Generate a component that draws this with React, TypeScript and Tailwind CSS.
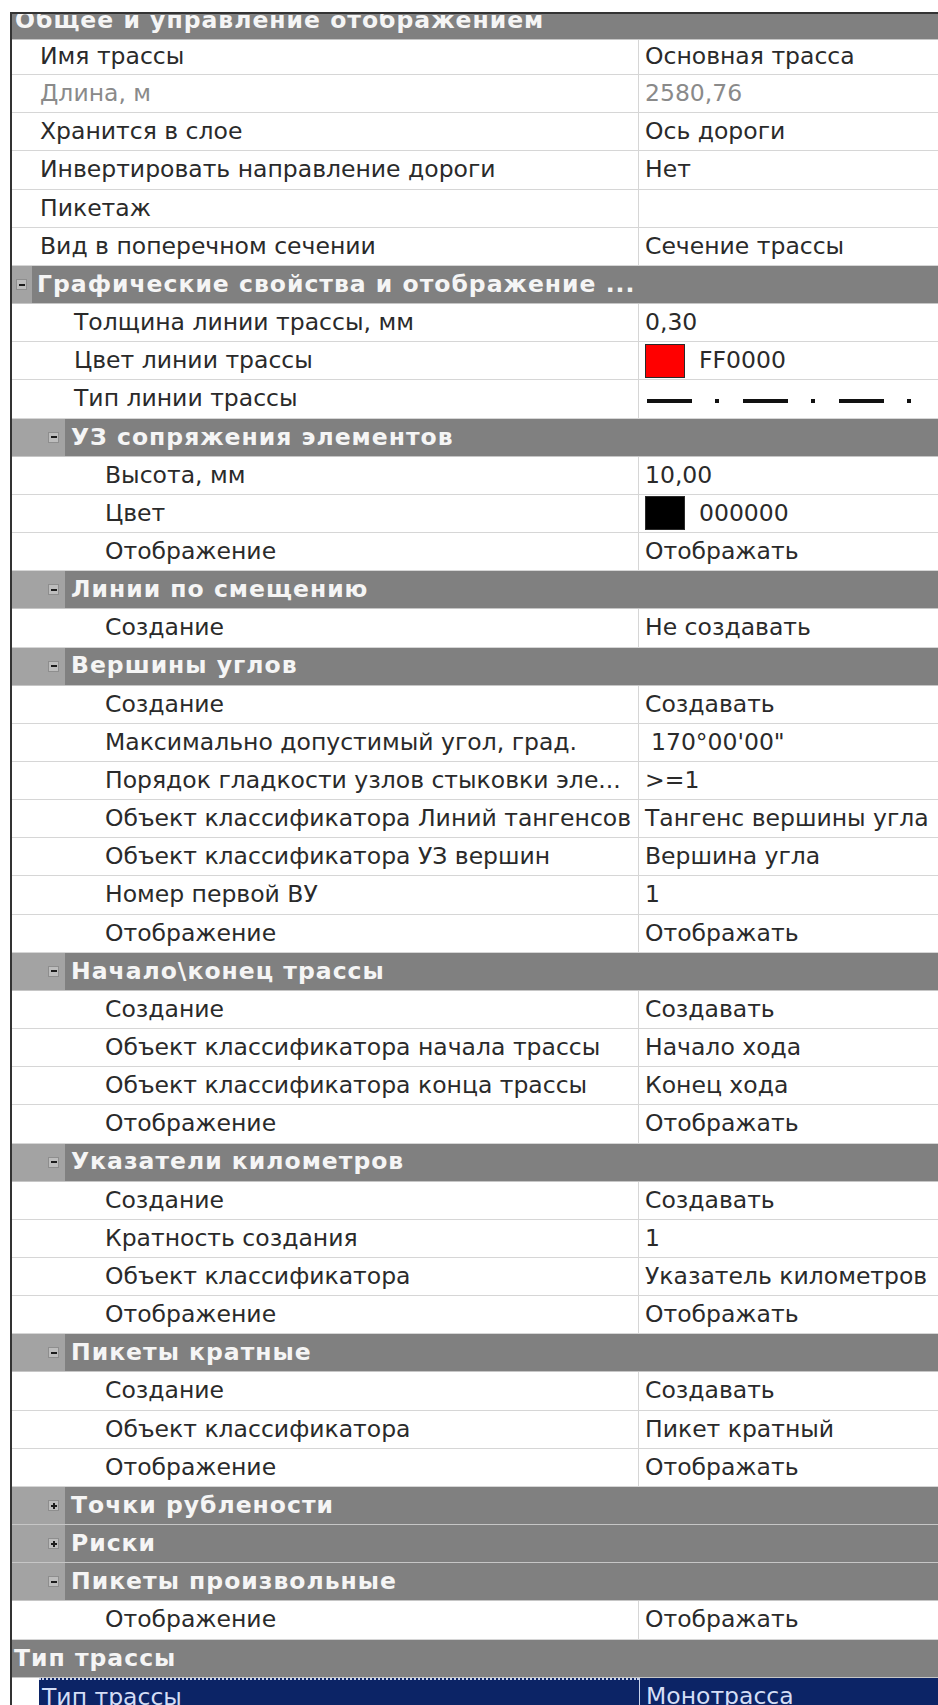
import React from "react";

type Row =
  | { kind: "group"; text: string; top?: boolean }
  | { kind: "section"; level: 1 | 2; text: string; open: boolean }
  | {
      kind: "prop";
      level: 0 | 1 | 2;
      label: string;
      value?: string;
      muted?: boolean;
      swatch?: string;
      lineType?: boolean;
      selected?: boolean;
      shift?: boolean;
      first?: boolean;
    };

const rows: Row[] = [
  { kind: "group", text: "Общее и управление отображением", top: true },
  { kind: "prop", level: 0, label: "Имя трассы", value: "Основная трасса", first: true },
  { kind: "prop", level: 0, label: "Длина, м", value: "2580,76", muted: true },
  { kind: "prop", level: 0, label: "Хранится в слое", value: "Ось дороги" },
  { kind: "prop", level: 0, label: "Инвертировать направление дороги", value: "Нет" },
  { kind: "prop", level: 0, label: "Пикетаж", value: "" },
  { kind: "prop", level: 0, label: "Вид в поперечном сечении", value: "Сечение трассы" },
  { kind: "section", level: 1, text: "Графические свойства и отображение ...", open: true },
  { kind: "prop", level: 1, label: "Толщина линии трассы, мм", value: "0,30" },
  { kind: "prop", level: 1, label: "Цвет линии трассы", value: "FF0000", swatch: "#ff0000" },
  { kind: "prop", level: 1, label: "Тип линии трассы", lineType: true },
  { kind: "section", level: 2, text: "УЗ сопряжения элементов", open: true },
  { kind: "prop", level: 2, label: "Высота, мм", value: "10,00" },
  { kind: "prop", level: 2, label: "Цвет", value: "000000", swatch: "#000000" },
  { kind: "prop", level: 2, label: "Отображение", value: "Отображать" },
  { kind: "section", level: 2, text: "Линии по смещению", open: true },
  { kind: "prop", level: 2, label: "Создание", value: "Не создавать" },
  { kind: "section", level: 2, text: "Вершины углов", open: true },
  { kind: "prop", level: 2, label: "Создание", value: "Создавать" },
  { kind: "prop", level: 2, label: "Максимально допустимый угол, град.", value: "170°00'00\"", shift: true },
  { kind: "prop", level: 2, label: "Порядок гладкости узлов стыковки эле...", value: ">=1" },
  { kind: "prop", level: 2, label: "Объект классификатора Линий тангенсов", value: "Тангенс вершины угла" },
  { kind: "prop", level: 2, label: "Объект классификатора УЗ вершин", value: "Вершина угла" },
  { kind: "prop", level: 2, label: "Номер первой ВУ", value: "1" },
  { kind: "prop", level: 2, label: "Отображение", value: "Отображать" },
  { kind: "section", level: 2, text: "Начало\\конец трассы", open: true },
  { kind: "prop", level: 2, label: "Создание", value: "Создавать" },
  { kind: "prop", level: 2, label: "Объект классификатора начала трассы", value: "Начало хода" },
  { kind: "prop", level: 2, label: "Объект классификатора конца трассы", value: "Конец хода" },
  { kind: "prop", level: 2, label: "Отображение", value: "Отображать" },
  { kind: "section", level: 2, text: "Указатели километров", open: true },
  { kind: "prop", level: 2, label: "Создание", value: "Создавать" },
  { kind: "prop", level: 2, label: "Кратность создания", value: "1" },
  { kind: "prop", level: 2, label: "Объект классификатора", value: "Указатель километров" },
  { kind: "prop", level: 2, label: "Отображение", value: "Отображать" },
  { kind: "section", level: 2, text: "Пикеты кратные", open: true },
  { kind: "prop", level: 2, label: "Создание", value: "Создавать" },
  { kind: "prop", level: 2, label: "Объект классификатора", value: "Пикет кратный" },
  { kind: "prop", level: 2, label: "Отображение", value: "Отображать" },
  { kind: "section", level: 2, text: "Точки рублености", open: false },
  { kind: "section", level: 2, text: "Риски", open: false },
  { kind: "section", level: 2, text: "Пикеты произвольные", open: true },
  { kind: "prop", level: 2, label: "Отображение", value: "Отображать" },
  { kind: "group", text: "Тип трассы" },
  { kind: "prop", level: 0, label: "Тип трассы", value: "Монотрасса", selected: true },
];

const labelPad = ["pl-[28px]", "pl-[62px]", "pl-[93px]"];

const ExpandBox = ({ open }: { open: boolean }) => (
  <span className="relative block w-[11px] h-[11px] border border-[#8e8e8e] bg-[#bdbdbd]">
    <span className="absolute left-[1.5px] top-[3.5px] w-[6px] h-[2px] bg-[#1c1c1c]" />
    {!open && <span className="absolute left-[3.5px] top-[1.5px] w-[2px] h-[6px] bg-[#1c1c1c]" />}
  </span>
);

// dash-dot pattern of the line type value
const LineType = () => (
  <svg width="300" height="38" className="block">
    {[0, 96, 192].map((x) => (
      <g key={x}>
        <rect x={2 + x} y={19} width={45} height={4} fill="#111" />
        <rect x={70 + x} y={19} width={4} height={4} fill="#111" />
      </g>
    ))}
  </svg>
);

const PropRow = ({ row }: { row: Extract<Row, { kind: "prop" }> }) => {
  const text = row.muted ? "text-[#8a8a8a]" : "text-[#2a2a2a]";
  if (row.selected) {
    return (
      <div className="flex h-[38.16px] shrink-0">
        <div className="w-[627px] shrink-0 pl-[27px] bg-white">
          <div className="h-full flex items-center pl-[3px] bg-[#0c2466] border-t-2 border-dotted border-[#c9d3ea] text-[#d4def6]">
            {row.label}
          </div>
        </div>
        <div className="flex-1 flex items-center pl-[6px] bg-[#0c2466] border-l border-[#c9d3ea] text-[#d4def6]">
          {row.value}
        </div>
      </div>
    );
  }
  return (
    <div
      className={`flex shrink-0 border-b border-[#d6d6d6] bg-white ${row.first ? "h-[35.16px]" : "h-[38.16px]"}`}
    >
      <div
        className={`w-[627px] shrink-0 flex items-center border-r border-[#d6d6d6] whitespace-nowrap ${labelPad[row.level]} ${text}`}
      >
        {row.label}
      </div>
      <div
        className={`flex-1 flex items-center whitespace-nowrap ${text} ${row.shift ? "pl-[12px]" : "pl-[6px]"} ${row.lineType ? "pl-[0px]" : ""}`}
      >
        {row.swatch && (
          <span
            className={`mr-[14px] w-[40px] h-[34px] border border-[#2a2a2a] ${row.swatch === "#ff0000" ? "bg-[#ff0000]" : "bg-black"}`}
          />
        )}
        {row.lineType ? <LineType /> : row.value}
      </div>
    </div>
  );
};

const SectionRow = ({ row }: { row: Extract<Row, { kind: "section" }> }) => (
  <div className="flex h-[38.16px] shrink-0 border-b border-[#c6c6c6] bg-[#808080]">
    <div
      className={`flex items-center justify-end bg-[#a3a3a3] ${row.level === 1 ? "w-[20px] pr-[5px]" : "w-[53px] pr-[6px]"}`}
    >
      <ExpandBox open={row.open} />
    </div>
    <div
      className={`flex items-center font-bold tracking-[1px] text-[#f5f5f5] whitespace-nowrap ${row.level === 1 ? "pl-[5px]" : "pl-[6px]"}`}
    >
      {row.text}
    </div>
  </div>
);

const GroupRow = ({ row }: { row: Extract<Row, { kind: "group" }> }) =>
  row.top ? (
    <div className="h-[26px] shrink-0 overflow-hidden border-b border-[#c6c6c6] bg-[#808080]">
      <div className="mt-[-9px] pl-[3px] leading-[30px] font-bold tracking-[1px] text-[#f5f5f5] whitespace-nowrap">
        {row.text}
      </div>
    </div>
  ) : (
    <div className="flex h-[38.16px] shrink-0 items-center border-b border-[#c6c6c6] bg-[#808080] pl-[2px] font-bold tracking-[1px] text-[#f5f5f5]">
      {row.text}
    </div>
  );

export default function App() {
  return (
    <div
      className="w-[938px] h-[1705px] overflow-hidden bg-white pt-[12px] pl-[10px] text-[23.5px]"
      style={{ fontFamily: "'DejaVu Sans', Verdana, sans-serif" }}
    >
      <div className="flex flex-col w-[940px] border-l-2 border-t-2 border-[#333]">
        {rows.map((row, i) => {
          if (row.kind === "group") return <GroupRow key={i} row={row} />;
          if (row.kind === "section") return <SectionRow key={i} row={row} />;
          return <PropRow key={i} row={row} />;
        })}
      </div>
    </div>
  );
}
